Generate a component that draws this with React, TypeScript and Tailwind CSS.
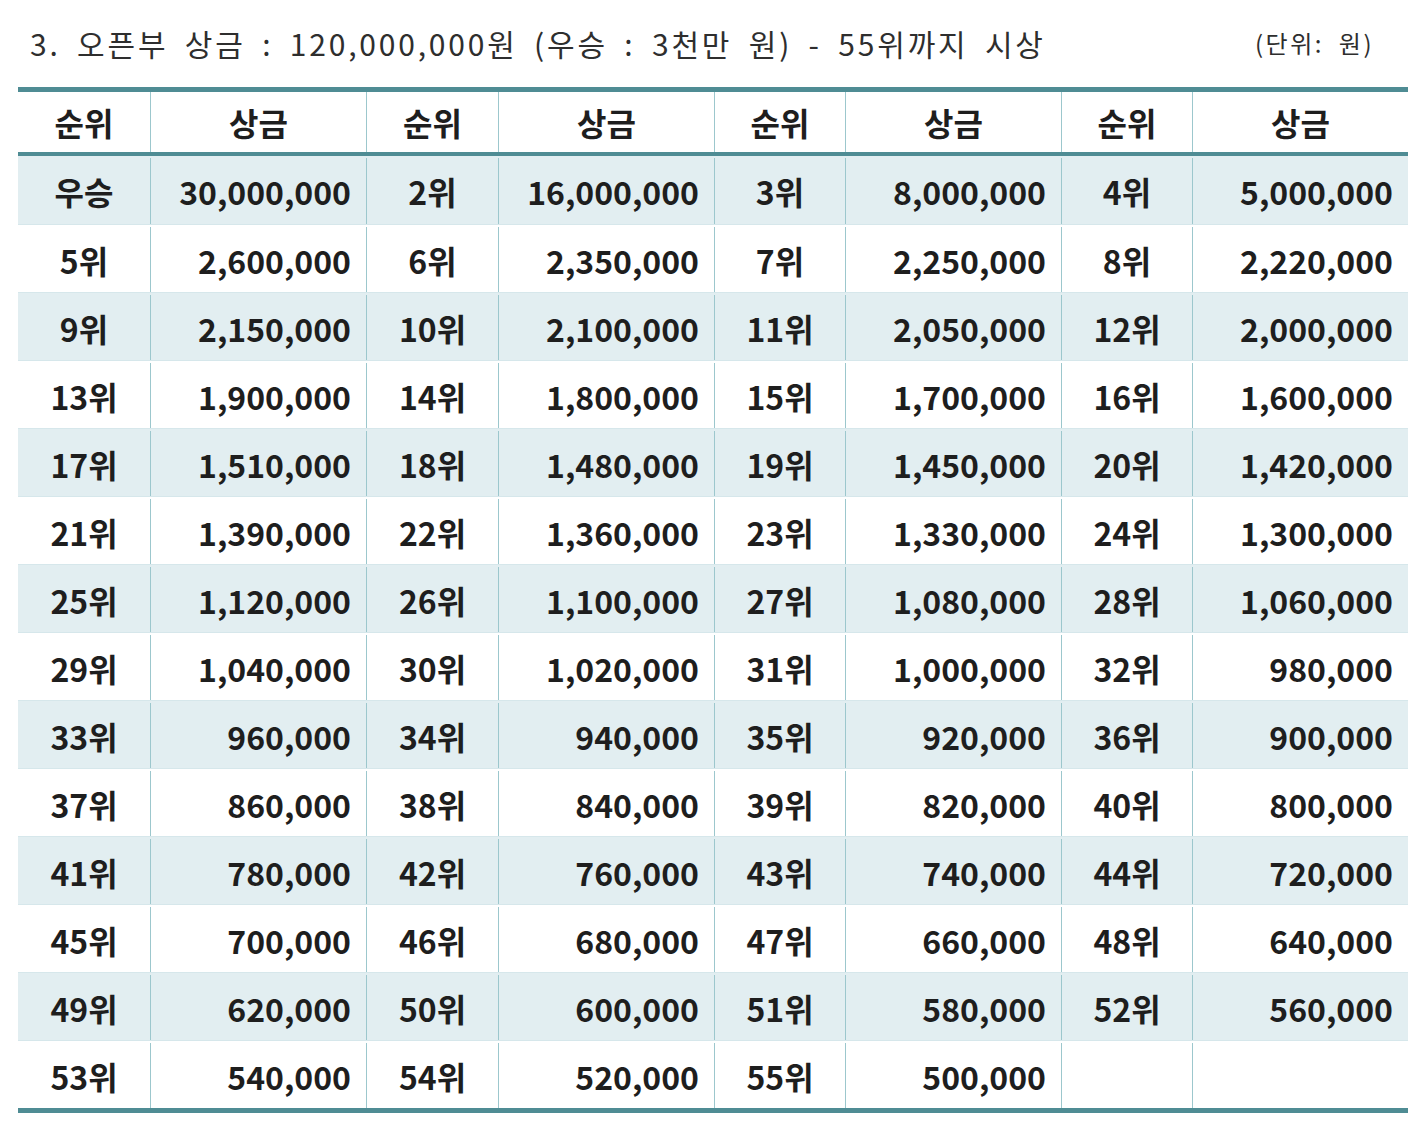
const prizes: [string, string][] = [
    ["우승", "30,000,000"], ["2위", "16,000,000"], ["3위", "8,000,000"], ["4위", "5,000,000"],
    ["5위", "2,600,000"], ["6위", "2,350,000"], ["7위", "2,250,000"], ["8위", "2,220,000"],
    ["9위", "2,150,000"], ["10위", "2,100,000"], ["11위", "2,050,000"], ["12위", "2,000,000"],
    ["13위", "1,900,000"], ["14위", "1,800,000"], ["15위", "1,700,000"], ["16위", "1,600,000"],
    ["17위", "1,510,000"], ["18위", "1,480,000"], ["19위", "1,450,000"], ["20위", "1,420,000"],
    ["21위", "1,390,000"], ["22위", "1,360,000"], ["23위", "1,330,000"], ["24위", "1,300,000"],
    ["25위", "1,120,000"], ["26위", "1,100,000"], ["27위", "1,080,000"], ["28위", "1,060,000"],
    ["29위", "1,040,000"], ["30위", "1,020,000"], ["31위", "1,000,000"], ["32위", "980,000"],
    ["33위", "960,000"], ["34위", "940,000"], ["35위", "920,000"], ["36위", "900,000"],
    ["37위", "860,000"], ["38위", "840,000"], ["39위", "820,000"], ["40위", "800,000"],
    ["41위", "780,000"], ["42위", "760,000"], ["43위", "740,000"], ["44위", "720,000"],
    ["45위", "700,000"], ["46위", "680,000"], ["47위", "660,000"], ["48위", "640,000"],
    ["49위", "620,000"], ["50위", "600,000"], ["51위", "580,000"], ["52위", "560,000"],
    ["53위", "540,000"], ["54위", "520,000"], ["55위", "500,000"], ["", ""],
]

const rows: [string, string][][] = []
for (let i = 0; i < prizes.length; i += 4) rows.push(prizes.slice(i, i + 4))

const grid = "grid grid-cols-[132px_216px_132px_216px_131px_216px_131px_216px]"
const sep = "border-l-[1.5px] border-[#9cc7cd]"

export default function App() {
    return (
        <div
            className="w-[1424px] h-[1135px] bg-white text-[#1e1e1e] pt-[22px]"
            style={{ fontFamily: '"Noto Sans CJK KR", "Noto Sans", sans-serif' }}
        >
            <div className="flex items-center justify-between pl-[30px] pr-[50px] h-[42px] text-[#2e2e2e]">
                <p className="text-[30px] tracking-[2.8px] [word-spacing:7px]">
                    3. 오픈부 상금 : 120,000,000원 (우승 : 3천만 원) - 55위까지 시상
                </p>
                <p className="text-[24px] tracking-[2.5px] [word-spacing:7px]">(단위: 원)</p>
            </div>
            <div className="ml-[18px] mt-[23px] w-[1390px] border-t-[5px] border-b-[5px] border-[#4f8c94]">
                <div className={`${grid} h-[64px] border-b-[4px] border-[#4f8c94] text-[32px] font-bold`}>
                    {[0, 1, 2, 3].map((k) => (
                        <div key={k} className="contents">
                            <div className={`flex items-center justify-center ${k > 0 ? sep : ""}`}>순위</div>
                            <div className={`flex items-center justify-center ${sep}`}>상금</div>
                        </div>
                    ))}
                </div>
                {rows.map((row, r) => (
                    <div
                        key={r}
                        className={`${grid} h-[68px] pt-[2px] text-[32px] font-bold ${r % 2 === 0 ? "bg-[#e2eef1]" : "bg-white"} ${r > 0 ? "border-t border-[#d6e7eb]" : ""}`}
                    >
                        {row.map(([rank, prize], k) => (
                            <div key={k} className="contents">
                                <div className={`flex items-center justify-center ${k > 0 ? sep : ""}`}>{rank}</div>
                                <div className={`flex items-center justify-end pr-[15px] ${sep}`}>{prize}</div>
                            </div>
                        ))}
                    </div>
                ))}
            </div>
        </div>
    )
}
